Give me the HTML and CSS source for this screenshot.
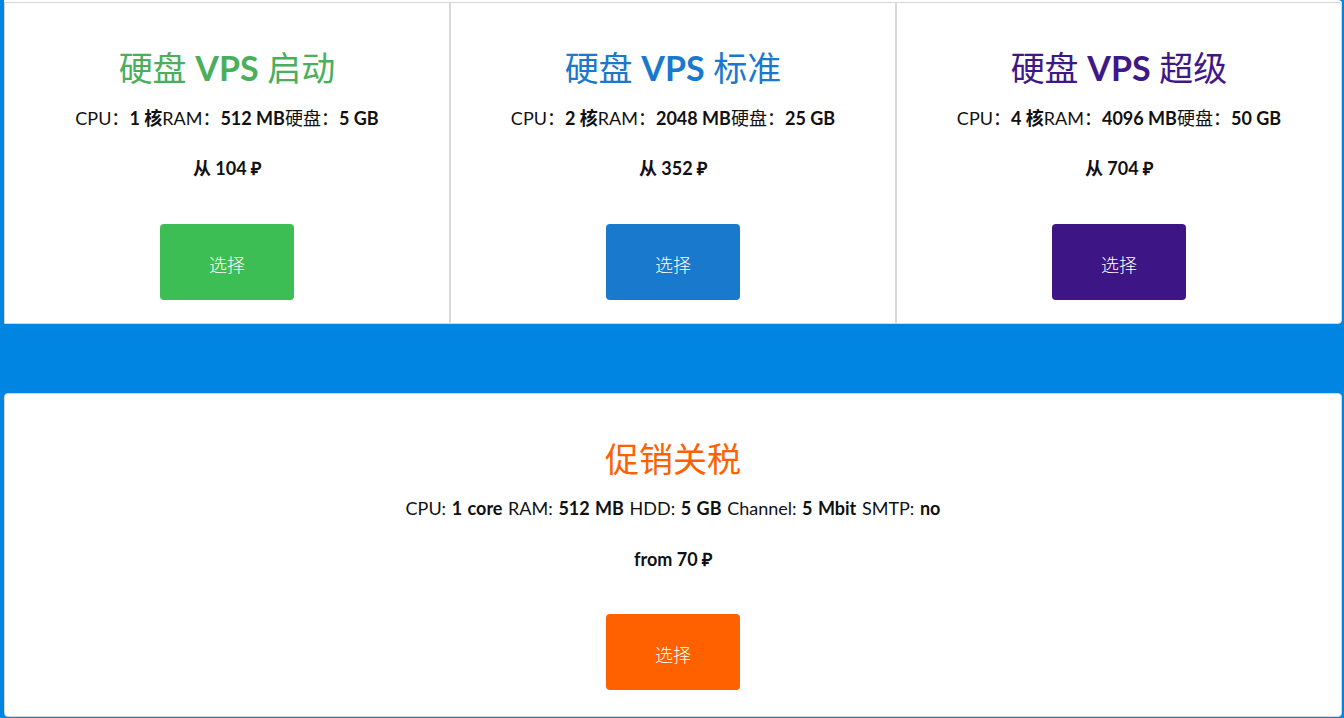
FILE: index.html
```html
<!DOCTYPE html>
<html lang="zh">
<head>
<meta charset="utf-8">
<title>VPS</title>
<link rel="stylesheet" href="styles.css">
</head>
<body>
<div class="page">
  <div class="row">
    <div class="plan">
      <h2 class="title green-t">硬盘 <b>VPS</b> 启动</h2>
      <p class="specs">CPU：<b>1 核</b>RAM：<b>512 MB</b>硬盘：<b>5 GB</b></p>
      <p class="price">从 104 ₽</p>
      <a class="btn green-b">选择</a>
    </div>
    <div class="plan">
      <h2 class="title blue-t">硬盘 <b>VPS</b> 标准</h2>
      <p class="specs">CPU：<b>2 核</b>RAM：<b>2048 MB</b>硬盘：<b>25 GB</b></p>
      <p class="price">从 352 ₽</p>
      <a class="btn blue-b">选择</a>
    </div>
    <div class="plan">
      <h2 class="title purple-t">硬盘 <b>VPS</b> 超级</h2>
      <p class="specs">CPU：<b>4 核</b>RAM：<b>4096 MB</b>硬盘：<b>50 GB</b></p>
      <p class="price">从 704 ₽</p>
      <a class="btn purple-b">选择</a>
    </div>
  </div>
  <div class="promo">
    <h2 class="title orange-t">促销关税</h2>
    <p class="specs">CPU: <b>1 core</b> RAM: <b>512 MB</b> HDD: <b>5 GB</b> Channel: <b>5 Mbit</b> SMTP: <b>no</b></p>
    <p class="price">from 70 ₽</p>
    <a class="btn orange-b">选择</a>
  </div>
</div>
</body>
</html>
```

FILE: styles.css
```css
* { box-sizing: border-box; }
html, body { margin: 0; padding: 0; }
body {
  background: #0085e3;
  font-family: Lato, "Noto Sans CJK SC", sans-serif;
  color: #111;
  height: 718px;
  overflow: hidden;
}
.page {
  padding: 2px 2px 0 4px;
}
.row {
  display: flex;
  background: #fff;
  border: 1px solid #d6d6d6;
  border-radius: 0 4px 4px 0;
  height: 322px;
  box-shadow: 0 -2px 0 #fff;
}
.plan {
  flex: 1 1 0;
  display: flex;
  flex-direction: column;
  align-items: center;
  padding-top: 43px;
}
.plan + .plan { border-left: 2px solid #d9d9d9; }
.title {
  margin: 0;
  font-size: 34px;
  line-height: 44px;
  font-weight: 400;
}
.title b { font-weight: 700; }
.specs {
  margin: 15px 0 0;
  font-size: 18px;
  line-height: 26px;
}
.promo .specs { word-spacing: 1px; }
.price {
  margin: 24px 0 0;
  font-size: 18px;
  line-height: 26px;
  font-weight: 700;
}
.btn {
  display: flex;
  align-items: center;
  justify-content: center;
  width: 134px;
  height: 76px;
  margin-top: 43px;
  padding-top: 3px;
  border-radius: 4px;
  color: #fff;
  font-size: 18px;
  font-weight: 300;
}
.promo {
  margin-top: 69px;
  background: #fff;
  border: 1px solid #d6d6d6;
  border-radius: 4px;
  height: 324px;
  display: flex;
  flex-direction: column;
  align-items: center;
  padding-top: 43px;
}
.promo .specs { margin-top: 14px; }
.promo .price { margin-top: 25px; }
.promo .btn { margin-top: 42px; }
.green-t { color: #4aae5b; }
.blue-t { color: #1a79cc; }
.purple-t { color: #3f1887; }
.orange-t { color: #ff6100; }
.green-b { background: #3dbe55; }
.blue-b { background: #1979cd; }
.purple-b { background: #3e1585; }
.orange-b { background: #ff6000; }
```
